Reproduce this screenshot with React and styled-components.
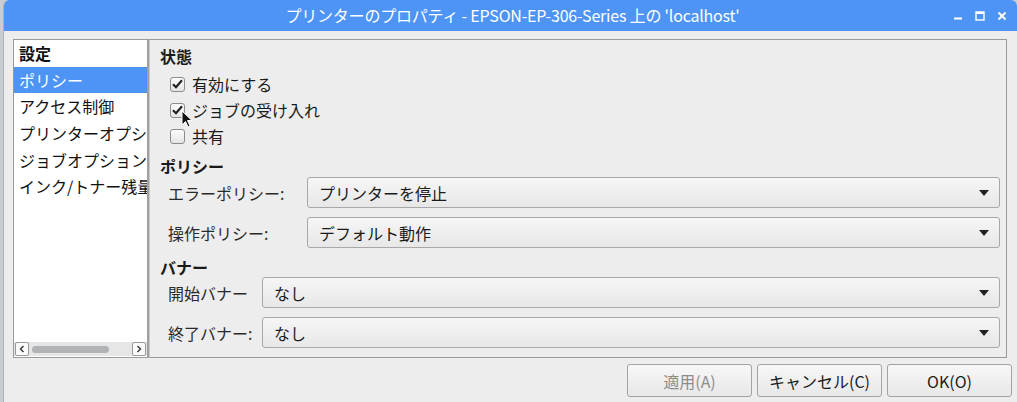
import React from "react";
import styled, { createGlobalStyle } from "styled-components";

const Global = createGlobalStyle`
  html, body { margin: 0; padding: 0; }
  body {
    width: 1017px; height: 402px; overflow: hidden;
    background: #c9ccd1;
    font-family: "Noto Sans CJK JP", "Noto Sans", sans-serif;
  }
`;

const Desktop = styled.div`
  display: flex;
  height: 402px;
  padding-left: 3px;
  box-sizing: border-box;
`;

const Window = styled.div`
  flex: 1;
  display: flex;
  flex-direction: column;
  border-radius: 6px 6px 0 0;
  overflow: hidden;
  background: #ededed;
  border-left: 1px solid #b0b0b0;
`;

const TitleBar = styled.div`
  position: relative;
  height: 31px;
  flex: none;
  background: #4d94f5;
  color: #fff;
  display: flex;
  align-items: center;
  justify-content: center;
  font-size: 16px;
`;

const TitleText = styled.span`
  margin-left: 4px;
  margin-top: -1px;
  letter-spacing: -0.2px;
`;

const Controls = styled.div`
  position: absolute;
  right: 10px;
  top: 0;
  height: 31px;
  display: flex;
  align-items: center;
  gap: 12px;
`;

const Body = styled.div`
  flex: 1;
  display: flex;
  flex-direction: column;
  padding: 8px 5px 5px 9px;
  gap: 6px;
`;

const Main = styled.div`
  height: 319px;
  display: flex;
  margin-right: 5px;
`;

const Sidebar = styled.div`
  width: 133px;
  flex: none;
  background: #fff;
  border: 1px solid #9a9a9a;
  border-right: 2px solid #a0a0a0;
  display: flex;
  flex-direction: column;
  overflow: hidden;
`;

const ListItems = styled.div`
  flex: 1;
`;

const ListItem = styled.div`
  height: 26.7px;
  line-height: 26.7px;
  padding-left: 5px;
  font-size: 16px;
  white-space: nowrap;
  overflow: hidden;
  color: ${p => (p.$selected ? "#fff" : "#111")};
  background: ${p => (p.$selected ? "#4d94f5" : "transparent")};
  font-weight: ${p => (p.$bold ? 600 : 400)};
`;

const HScroll = styled.div`
  height: 14px;
  background: #e6e6e6;
  display: flex;
  align-items: center;
  padding: 0 1px;
  gap: 3px;
  margin-bottom: 1px;
`;

const ScrollBtn = styled.div`
  width: 12px;
  height: 12px;
  border: 1px solid #9a9a9a;
  border-radius: 2px;
  background: #fafafa;
  display: flex;
  align-items: center;
  justify-content: center;
`;

const Track = styled.div`
  flex: 1;
  height: 14px;
  display: flex;
  align-items: center;
`;

const Thumb = styled.div`
  width: 77px;
  height: 7px;
  border-radius: 4px;
  background: #b0b4b6;
`;

const Panel = styled.div`
  flex: 1;
  border: 1px solid #9a9a9a;
  border-left: 1px solid #c8c8c8;
  padding: 0 6px 0 10px;
  display: flex;
  flex-direction: column;
`;

const Heading = styled.div`
  font-size: 16px;
  font-weight: 700;
  color: #1a1a1a;
  height: 20px;
  line-height: 20px;
  margin-top: ${p => p.$top}px;
`;

const CheckList = styled.div`
  display: flex;
  flex-direction: column;
  margin-top: 5px;
  padding-left: 10px;
`;

const CheckRow = styled.label`
  height: 26px;
  display: flex;
  align-items: center;
  gap: 7px;
  font-size: 16px;
  color: #1a1a1a;
`;

const Box = styled.span`
  width: 13px;
  height: 13px;
  border: 1px solid #8c8c8c;
  border-radius: 3px;
  background: linear-gradient(#fdfdfd, #e4e4e4);
  display: flex;
  align-items: center;
  justify-content: center;
`;

const FormGrid = styled.div`
  display: grid;
  grid-template-columns: ${p => p.$label}px 1fr;
  row-gap: 9px;
  margin-top: ${p => p.$top}px;
  padding-left: 8px;
  align-items: center;
`;

const FieldLabel = styled.div`
  font-size: 16px;
  color: #2a2a2a;
  white-space: nowrap;
`;

const Combo = styled.div`
  height: 29px;
  border: 1px solid #a8a8a8;
  border-radius: 3px;
  background: linear-gradient(#f6f6f6, #e7e7e7);
  display: flex;
  align-items: center;
  justify-content: space-between;
  padding: 0 10px 0 11px;
  font-size: 16px;
  color: #1a1a1a;
`;

const Buttons = styled.div`
  height: 33px;
  display: flex;
  justify-content: flex-end;
  gap: 5px;
`;

const Button = styled.div`
  width: 123px;
  height: 31px;
  border: 1px solid #a3a3a3;
  border-radius: 3px;
  background: linear-gradient(#f7f7f7, #e8e8e8);
  display: flex;
  align-items: center;
  justify-content: center;
  font-size: 16px;
  color: ${p => (p.$disabled ? "#8c8c8c" : "#1a1a1a")};
`;

const Cursor = styled.svg`
  position: absolute;
  left: 181px;
  top: 110px;
`;

const Arrow = () => (
  <svg width="10" height="6" viewBox="0 0 10 6">
    <path d="M0 0 H10 L5 6 Z" fill="#222" />
  </svg>
);

const Check = () => (
  <svg width="11" height="10" viewBox="0 0 11 10">
    <path d="M1 5.2 L4 8.2 L10 1.2" fill="none" stroke="#222" strokeWidth="2.2" />
  </svg>
);

const Chevron = ({ dir }) => (
  <svg width="6" height="8" viewBox="0 0 6 8">
    <path d={dir === "l" ? "M4.5 1 L1.5 4 L4.5 7" : "M1.5 1 L4.5 4 L1.5 7"} fill="none" stroke="#333" strokeWidth="1.4" />
  </svg>
);

const items = ["設定", "ポリシー", "アクセス制御", "プリンターオプション", "ジョブオプション", "インク/トナー残量"];

export default function App() {
  return (
    <>
      <Global />
      <Desktop>
        <Window>
          <TitleBar>
            <TitleText>プリンターのプロパティ - EPSON-EP-306-Series 上の 'localhost'</TitleText>
            <Controls>
              <svg width="9" height="9" viewBox="0 0 9 9"><rect x="0" y="6.5" width="8" height="2" fill="#fff" /></svg>
              <svg width="10" height="10" viewBox="0 0 10 10"><rect x="1" y="1" width="8" height="8" fill="none" stroke="#fff" strokeWidth="1.4" /><rect x="1" y="1" width="8" height="2" fill="#fff" /></svg>
              <svg width="10" height="10" viewBox="0 0 10 10"><path d="M1.5 1.5 L8.5 8.5 M8.5 1.5 L1.5 8.5" stroke="#fff" strokeWidth="2" /></svg>
            </Controls>
          </TitleBar>
          <Body>
            <Main>
              <Sidebar>
                <ListItems>
                  {items.map((t, i) => (
                    <ListItem key={t} $selected={i === 1} $bold={i === 0}>{t}</ListItem>
                  ))}
                </ListItems>
                <HScroll>
                  <ScrollBtn><Chevron dir="l" /></ScrollBtn>
                  <Track><Thumb /></Track>
                  <ScrollBtn><Chevron dir="r" /></ScrollBtn>
                </HScroll>
              </Sidebar>
              <Panel>
                <Heading $top={6}>状態</Heading>
                <CheckList>
                  <CheckRow><Box><Check /></Box>有効にする</CheckRow>
                  <CheckRow><Box><Check /></Box>ジョブの受け入れ</CheckRow>
                  <CheckRow><Box />共有</CheckRow>
                </CheckList>
                <Heading $top={7}>ポリシー</Heading>
                <FormGrid $label={139} $top={1}>
                  <FieldLabel>エラーポリシー:</FieldLabel>
                  <Combo>プリンターを停止<Arrow /></Combo>
                  <FieldLabel>操作ポリシー:</FieldLabel>
                  <Combo>デフォルト動作<Arrow /></Combo>
                </FormGrid>
                <Heading $top={9}>バナー</Heading>
                <FormGrid $label={94} $top={0}>
                  <FieldLabel>開始バナー</FieldLabel>
                  <Combo>なし<Arrow /></Combo>
                  <FieldLabel>終了バナー:</FieldLabel>
                  <Combo>なし<Arrow /></Combo>
                </FormGrid>
              </Panel>
            </Main>
            <Buttons>
              <Button $disabled>適用(A)</Button>
              <Button>キャンセル(C)</Button>
              <Button>OK(O)</Button>
            </Buttons>
          </Body>
        </Window>
      </Desktop>
      <Cursor width="12" height="19" viewBox="0 0 12 19">
        <path d="M1 1 L1 15 L4.5 11.5 L7 17 L9 16 L6.5 10.5 L11 10.5 Z" fill="#111" stroke="#fff" strokeWidth="1" />
      </Cursor>
    </>
  );
}
